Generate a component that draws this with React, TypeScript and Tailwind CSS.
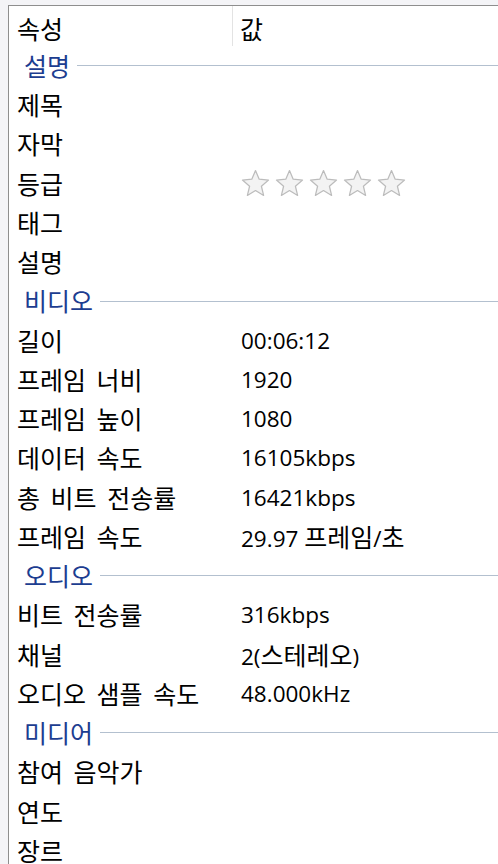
import type { ReactNode } from 'react'

type Row =
  | { kind: 'section'; label: string }
  | { kind: 'prop'; label: string; value?: ReactNode }

// Hangul in the screenshot is set larger than the Latin digits, so split runs
const T = ({ text }: { text: string }) => (
  <>
    {text.split(/([\uAC00-\uD7A3\u3131-\u318E][\uAC00-\uD7A3\u3131-\u318E ]*)/).map((part, i) =>
      i % 2 === 1 ? (
        <span
          key={i}
          className="text-[25px] [word-spacing:5px] [font-family:'Noto_Sans_CJK_KR',sans-serif]"
        >
          {part}
        </span>
      ) : (
        <span key={i}>{part}</span>
      )
    )}
  </>
)

const Star = () => (
  <svg width="33" height="33" viewBox="0 0 24 24" className="shrink-0">
    <path
      d="M12 2.6l2.7 6.3 6.8.6-5.2 4.5 1.6 6.7L12 17.1l-5.9 3.6 1.6-6.7-5.2-4.5 6.8-.6z"
      fill="#f3f3f3"
      stroke="#bcbcbc"
      strokeWidth="0.9"
      strokeLinejoin="round"
    />
  </svg>
)

const Rating = () => (
  <div className="flex items-center gap-[1px] -ml-[2px]">
    {[0, 1, 2, 3, 4].map((i) => (
      <Star key={i} />
    ))}
  </div>
)

const rows: Row[] = [
  { kind: 'section', label: '설명' },
  { kind: 'prop', label: '제목' },
  { kind: 'prop', label: '자막' },
  { kind: 'prop', label: '등급', value: <Rating /> },
  { kind: 'prop', label: '태그' },
  { kind: 'prop', label: '설명' },
  { kind: 'section', label: '비디오' },
  { kind: 'prop', label: '길이', value: '00:06:12' },
  { kind: 'prop', label: '프레임 너비', value: '1920' },
  { kind: 'prop', label: '프레임 높이', value: '1080' },
  { kind: 'prop', label: '데이터 속도', value: '16105kbps' },
  { kind: 'prop', label: '총 비트 전송률', value: '16421kbps' },
  { kind: 'prop', label: '프레임 속도', value: '29.97 프레임/초' },
  { kind: 'section', label: '오디오' },
  { kind: 'prop', label: '비트 전송률', value: '316kbps' },
  { kind: 'prop', label: '채널', value: '2(스테레오)' },
  { kind: 'prop', label: '오디오 샘플 속도', value: '48.000kHz' },
  { kind: 'section', label: '미디어' },
  { kind: 'prop', label: '참여 음악가' },
  { kind: 'prop', label: '연도' },
  { kind: 'prop', label: '장르' }
]

export default function App() {
  return (
    <div
      className="w-[498px] h-[864px] overflow-hidden bg-[#f4f4f7] pt-[5px] pl-[8px]"
      style={{ fontFamily: '"Open Sans", "Noto Sans CJK KR", sans-serif' }}
    >
      <div className="h-full border-t border-l border-[#8e8e8e] bg-white text-[22.5px] text-black">
        <div className="flex h-[40px] items-center">
          <div className="flex h-full w-[223px] items-center pl-[8px] pt-[6px]">
            <T text="속성" />
          </div>
          <div className="h-[40px] w-px bg-[#e3e3e3]" />
          <div className="pl-[7px] pt-[6px]">
            <T text="값" />
          </div>
        </div>
        {rows.map((row, i) =>
          row.kind === 'section' ? (
            <div key={i} className="flex h-[39.25px] items-center pl-[15px]">
              <span className="text-[#1c3d90]">
                <T text={row.label} />
              </span>
              <div className="ml-[7px] h-px flex-1 bg-[#b3c0cf]" />
            </div>
          ) : (
            <div key={i} className="flex h-[39.25px] items-center">
              <div className="w-[224px] pl-[8px] whitespace-nowrap">
                <T text={row.label} />
              </div>
              <div className="pl-[8px] whitespace-nowrap">
                {typeof row.value === 'string' ? <T text={row.value} /> : row.value}
              </div>
            </div>
          )
        )}
      </div>
    </div>
  )
}
